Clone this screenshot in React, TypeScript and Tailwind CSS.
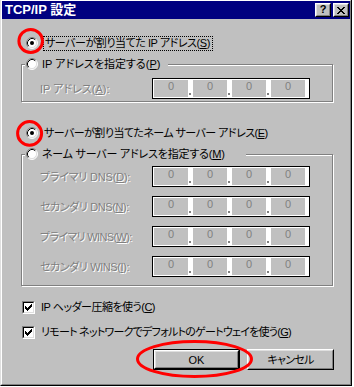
import React from "react";

function Radio({ checked }: { checked?: boolean }) {
  return (
    <svg width="12" height="12" viewBox="0 0 12 12" className="shrink-0 block">
      <circle cx="6" cy="6" r="5" fill="#fff" />
      <path d="M2.11 9.89A5.5 5.5 0 0 1 9.89 2.11" stroke="#808080" fill="none" />
      <path d="M9.89 2.11A5.5 5.5 0 0 1 2.11 9.89" stroke="#fff" fill="none" />
      <path d="M2.82 9.18A4.5 4.5 0 0 1 9.18 2.82" stroke="#000" fill="none" />
      <path d="M9.18 2.82A4.5 4.5 0 0 1 2.82 9.18" stroke="#dfdfdf" fill="none" />
      {checked && <circle cx="6" cy="6" r="2" fill="#000" />}
    </svg>
  );
}

function Checkbox() {
  return (
    <div className="w-[13px] h-[13px] shrink-0 border border-t-[#808080] border-l-[#808080] border-r-white border-b-white">
      <div className="w-full h-full border border-t-black border-l-black border-r-[#dfdfdf] border-b-[#dfdfdf] bg-white flex items-center justify-center">
        <svg width="7" height="7" viewBox="0 0 7 7" shapeRendering="crispEdges" className="block">
          <path
            d="M0 2h1v3H0z M1 3h1v3H1z M2 4h1v3H2z M3 3h1v3H3z M4 2h1v3H4z M5 1h1v3H5z M6 0h1v3H6z"
            fill="#000"
          />
        </svg>
      </div>
    </div>
  );
}

function Seg() {
  return (
    <div className="w-[34px] h-full bg-[#c0c0c0] flex justify-center text-[#808080] text-[11px] leading-[13px] tracking-normal font-['Liberation_Sans',sans-serif]">
      0
    </div>
  );
}

function Dot() {
  return (
    <div className="w-[5px] h-full flex items-end pb-[2px] pl-px">
      <div className="w-[2px] h-[2px] bg-[#808080]" />
    </div>
  );
}

function IpBox() {
  return (
    <div className="w-[158px] h-[21px] border border-black bg-white p-px flex">
      <Seg />
      <Dot />
      <Seg />
      <Dot />
      <Seg />
      <Dot />
      <Seg />
    </div>
  );
}

function Acc({ k }: { k: string }) {
  return (
    <>
      (<span className="underline underline-offset-[1px]">{k}</span>)
    </>
  );
}

function DisabledRow({ label, k, tr }: { label: string; k: string; tr: string }) {
  return (
    <div className="h-[21px] flex items-center">
      <div className="w-[112px] shrink-0">
        <span className={`text-[#808080] [text-shadow:1px_1px_0_#fff] whitespace-nowrap ${tr}`}>
          {label}
          <Acc k={k} />:
        </span>
      </div>
      <IpBox />
    </div>
  );
}

function CaptionButton({ children }: { children: React.ReactNode }) {
  return (
    <div className="w-[16px] h-[14px] border border-t-white border-l-white border-r-black border-b-black">
      <div className="w-full h-full border border-t-[#dfdfdf] border-l-[#dfdfdf] border-r-[#808080] border-b-[#808080] bg-[#c0c0c0] flex items-center justify-center">
        {children}
      </div>
    </div>
  );
}

function PushButton({ children, isDefault }: { children: React.ReactNode; isDefault?: boolean }) {
  const inner = (
    <div className="w-full h-full border border-t-white border-l-white border-r-black border-b-black">
      <div className="w-full h-full border border-t-[#dfdfdf] border-l-[#dfdfdf] border-r-[#808080] border-b-[#808080] bg-[#c0c0c0] flex items-center justify-center text-black">
        {children}
      </div>
    </div>
  );
  if (isDefault) {
    return <div className="w-[87px] h-[21px] border border-black">{inner}</div>;
  }
  return <div className="w-[87px] h-[21px]">{inner}</div>;
}

export default function App() {
  return (
    <div className="relative w-[354px] h-[387px] bg-white overflow-hidden font-['Liberation_Sans','Noto_Sans_CJK_JP',sans-serif] text-[11px] leading-[16px] [font-feature-settings:'palt'] text-black">
      <div className="w-[352px] h-[386px] border-l border-l-[#dfdfdf] border-r border-r-black border-b border-b-black">
        <div className="h-full border-l border-l-white border-t border-t-white border-r border-r-[#808080] border-b border-b-[#808080] bg-[#c0c0c0] flex flex-col">
          {/* Title bar */}
          <div className="h-[18px] shrink-0 bg-[#000080] flex items-center pl-[3px] pr-px">
            <span className="text-white font-bold text-[13px] leading-[16px] whitespace-nowrap [font-feature-settings:normal]">
              TCP/IP 設定
            </span>
            <div className="ml-auto flex gap-[2px]">
              <CaptionButton>
                <span className="font-bold text-[11px] leading-[11px] font-['Liberation_Sans',sans-serif] -mt-px">?</span>
              </CaptionButton>
              <CaptionButton>
                <svg width="8" height="7" viewBox="0 0 8 7" shapeRendering="crispEdges" className="block">
                  <path
                    d="M0 0h2v1H0z M6 0h2v1H6z M1 1h2v1H1z M5 1h2v1H5z M2 2h4v1H2z M3 3h2v1H3z M2 4h4v1H2z M1 5h2v1H1z M5 5h2v1H5z M0 6h2v1H0z M6 6h2v1H6z"
                    fill="#000"
                  />
                </svg>
              </CaptionButton>
            </div>
          </div>

          {/* Content */}
          <div className="flex flex-col pl-[19px]">
            <div className="mt-[16px] h-[16px] flex items-center ml-[5px]">
              <Radio checked />
              <div className="ml-[5px] h-[15px] border border-dotted border-black pl-px pr-[2px] flex items-center">
                <span className="whitespace-nowrap tracking-[-0.45px]">
                  サーバーが割り当てた IP アドレス<Acc k="S" />
                </span>
              </div>
            </div>

            <div className="relative mt-[13px] w-[312px] border border-[#808080] shadow-[inset_1px_1px_0_#fff,1px_1px_0_#fff] pt-[13px] pb-[2px] pl-[18px]">
              <div className="absolute left-[3px] top-[-9px] w-[143px] h-[16px] bg-[#c0c0c0] flex items-center pl-px">
                <Radio />
                <span className="ml-[4px] whitespace-nowrap">
                  IP アドレスを指定する<Acc k="P" />
                </span>
              </div>
              <DisabledRow label="IP アドレス" k="A" tr="tracking-normal" />
            </div>

            <div className="mt-[23px] h-[16px] flex items-center ml-[5px]">
              <Radio checked />
              <span className="ml-[6px] whitespace-nowrap tracking-[-0.55px]">
                サーバーが割り当てたネーム サーバー アドレス<Acc k="E" />
              </span>
            </div>

            <div className="relative mt-[13px] w-[312px] border border-[#808080] shadow-[inset_1px_1px_0_#fff,1px_1px_0_#fff] pt-[11px] pb-[8px] pl-[18px] flex flex-col gap-[9px]">
              <div className="absolute left-[3px] top-[-9px] w-[221px] h-[16px] bg-[#c0c0c0] flex items-center pl-px">
                <Radio />
                <span className="ml-[4px] whitespace-nowrap tracking-[-0.2px]">
                  ネーム サーバー アドレスを指定する<Acc k="M" />
                </span>
              </div>
              <DisabledRow label="プライマリ DNS" k="D" tr="tracking-[-0.2px]" />
              <DisabledRow label="セカンダリ DNS" k="N" tr="tracking-[-0.4px]" />
              <DisabledRow label="プライマリ WINS" k="W" tr="tracking-[-0.65px]" />
              <DisabledRow label="セカンダリ WINS" k="I" tr="tracking-[-0.4px]" />
            </div>

            <div className="mt-[13px] h-[16px] flex items-center ml-px">
              <Checkbox />
              <span className="ml-[6px] whitespace-nowrap tracking-[-0.5px]">
                IP ヘッダー圧縮を使う<Acc k="C" />
              </span>
            </div>
            <div className="mt-[9px] h-[16px] flex items-center ml-px">
              <Checkbox />
              <span className="ml-[6px] whitespace-nowrap tracking-[-0.75px]">
                リモート ネットワークでデフォルトのゲートウェイを使う<Acc k="G" />
              </span>
            </div>

            <div className="mt-[9px] w-[313px] flex justify-end gap-[7px]">
              <PushButton isDefault>OK</PushButton>
              <PushButton>
                <span className="tracking-[-0.75px]">キャンセル</span>
              </PushButton>
            </div>
          </div>
        </div>
      </div>

      {/* Red annotation marks */}
      <svg className="absolute left-0 top-0 pointer-events-none" width="354" height="387" viewBox="0 0 354 387">
        <ellipse cx="30.7" cy="41" rx="11.8" ry="11.5" fill="none" stroke="#ff0000" strokeWidth="3" />
        <ellipse cx="29.6" cy="133.4" rx="12" ry="11.8" fill="none" stroke="#ff0000" strokeWidth="3" />
        <ellipse cx="194.5" cy="359" rx="57" ry="17.5" fill="none" stroke="#ff0000" strokeWidth="3" />
      </svg>
    </div>
  );
}
